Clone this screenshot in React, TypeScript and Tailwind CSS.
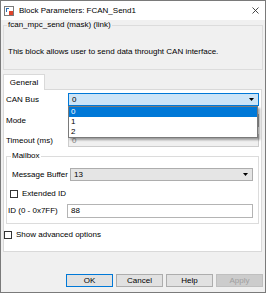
const Arrow = () => (
  <svg width="5" height="3" viewBox="0 0 5 3" className="shrink-0">
    <path d="M0 0h5L2.5 3z" fill="#000" />
  </svg>
);

const Check = () => <span className="w-[8px] h-[8px] border border-[#333] bg-white shrink-0" />;

const Button = ({ label, primary, disabled }: { label: string; primary?: boolean; disabled?: boolean }) => (
  <button
    className={
      "w-[47px] h-[13px] flex items-center justify-center border leading-none " +
      (primary
        ? "border-[#0078d7] bg-[#e1e1e1] text-black"
        : disabled
        ? "border-[#bfbfbf] bg-[#cccccc] text-[#a0a0a0]"
        : "border-[#adadad] bg-[#e1e1e1] text-black")
    }
  >
    {label}
  </button>
);

export default function App() {
  return (
    <div className="w-[266px] h-[293px] border border-[#7a7a7a] bg-[#f0f0f0] flex flex-col overflow-hidden text-[8px] leading-[10px] text-black font-['Liberation_Sans',sans-serif]">
      {/* title bar */}
      <div className="h-[19px] bg-white flex items-center pl-[3px] pr-[6px]">
        <svg width="10" height="10" viewBox="0 0 10 10" className="shrink-0">
          <rect x="0.5" y="0.5" width="9" height="9" fill="#fff" stroke="#7a7a7a" />
          <path d="M2 2h3v1H3v3H2z" fill="#2b6cb0" />
          <rect x="5" y="5" width="4" height="4" fill="#e0442b" />
        </svg>
        <span className="ml-[5px]">Block Parameters: FCAN_Send1</span>
        <svg width="7" height="7" viewBox="0 0 7 7" className="ml-auto">
          <path d="M0.5 0.5l6 6M6.5 0.5l-6 6" stroke="#333" strokeWidth="0.9" />
        </svg>
      </div>

      <div className="flex-1 flex flex-col px-[2px]">
        <fieldset className="border border-[#dcdcdc] px-[3px] pb-[11px]">
          <legend className="px-[1px] leading-[10px]">fcan_mpc_send (mask) (link)</legend>
          <p className="mt-[16px] leading-[12px] pl-[1px]">This block allows user to send data throught CAN interface.</p>
        </fieldset>

        {/* tab */}
        <div className="mt-[4px] relative z-10 -mb-px w-[42px] h-[16px] border-t border-l border-r border-[#d9d9d9] bg-white flex items-center justify-center">
          General
        </div>

        <div className="relative mr-[1px] h-[163px] border border-[#d9d9d9] bg-white px-[2px] flex flex-col">
          <div className="mt-[3px] flex items-center">
            <span className="w-[62px]">CAN Bus</span>
            <div className="flex-1 h-[13px] border border-[#0078d7] bg-[#cce4f7] flex items-center pl-[3px] pr-[4px]">
              <span className="flex-1">0</span>
              <Arrow />
            </div>
          </div>
          <div className="mt-[8px] flex items-center">
            <span className="w-[62px]">Mode</span>
            <div className="flex-1 h-[13px] border border-[#adadad] bg-[#e5e5e5]" />
          </div>
          <div className="mt-[7px] flex items-center">
            <span className="w-[62px]">Timeout (ms)</span>
            <div className="flex-1 h-[13px] border border-[#cccccc] bg-[#f0f0f0] pl-[3px] text-[#838383] flex items-center">0</div>
          </div>

          <fieldset className="mt-[4px] border border-[#dcdcdc] px-[1px] pb-[5px]">
            <legend className="ml-[3px] px-[1px] leading-[10px]">Mailbox</legend>
            <div className="mt-[7px] flex items-center pl-[4px] pr-[4px]">
              <span className="w-[58px]">Message Buffer</span>
              <div className="flex-1 h-[13px] border border-[#adadad] bg-[#e5e5e5] flex items-center pl-[3px] pr-[4px]">
                <span className="flex-1">13</span>
                <Arrow />
              </div>
            </div>
            <div className="mt-[7px] h-[12px] flex items-center gap-[4px] pl-[2px]">
              <Check />
              <span>Extended ID</span>
            </div>
            <div className="mt-[4px] flex items-center pr-[4px]">
              <span className="w-[59px]">ID (0 - 0x7FF)</span>
              <div className="flex-1 h-[14px] border border-[#b4b4b4] bg-white flex items-center pl-[3px]">88</div>
            </div>
          </fieldset>

          <div className="mt-[5px] h-[12px] flex items-center gap-[4px] -ml-[2px]">
            <Check />
            <span>Show advanced options</span>
          </div>

          {/* open dropdown list */}
          <div className="absolute left-[64px] top-[16px] w-[190px] border border-[#7a7a7a] bg-white shadow-[2px_2px_2px_rgba(0,0,0,0.35)] flex flex-col">
            <div className="h-[10px] bg-[#0078d7] text-white pl-[2px] flex items-center">0</div>
            <div className="h-[10px] pl-[2px] flex items-center">1</div>
            <div className="h-[10px] pl-[2px] flex items-center">2</div>
          </div>
        </div>

        <div className="mt-[22px] flex justify-end gap-[3px]">
          <Button label="OK" primary />
          <Button label="Cancel" />
          <Button label="Help" />
          <Button label="Apply" disabled />
        </div>
      </div>
    </div>
  );
}
